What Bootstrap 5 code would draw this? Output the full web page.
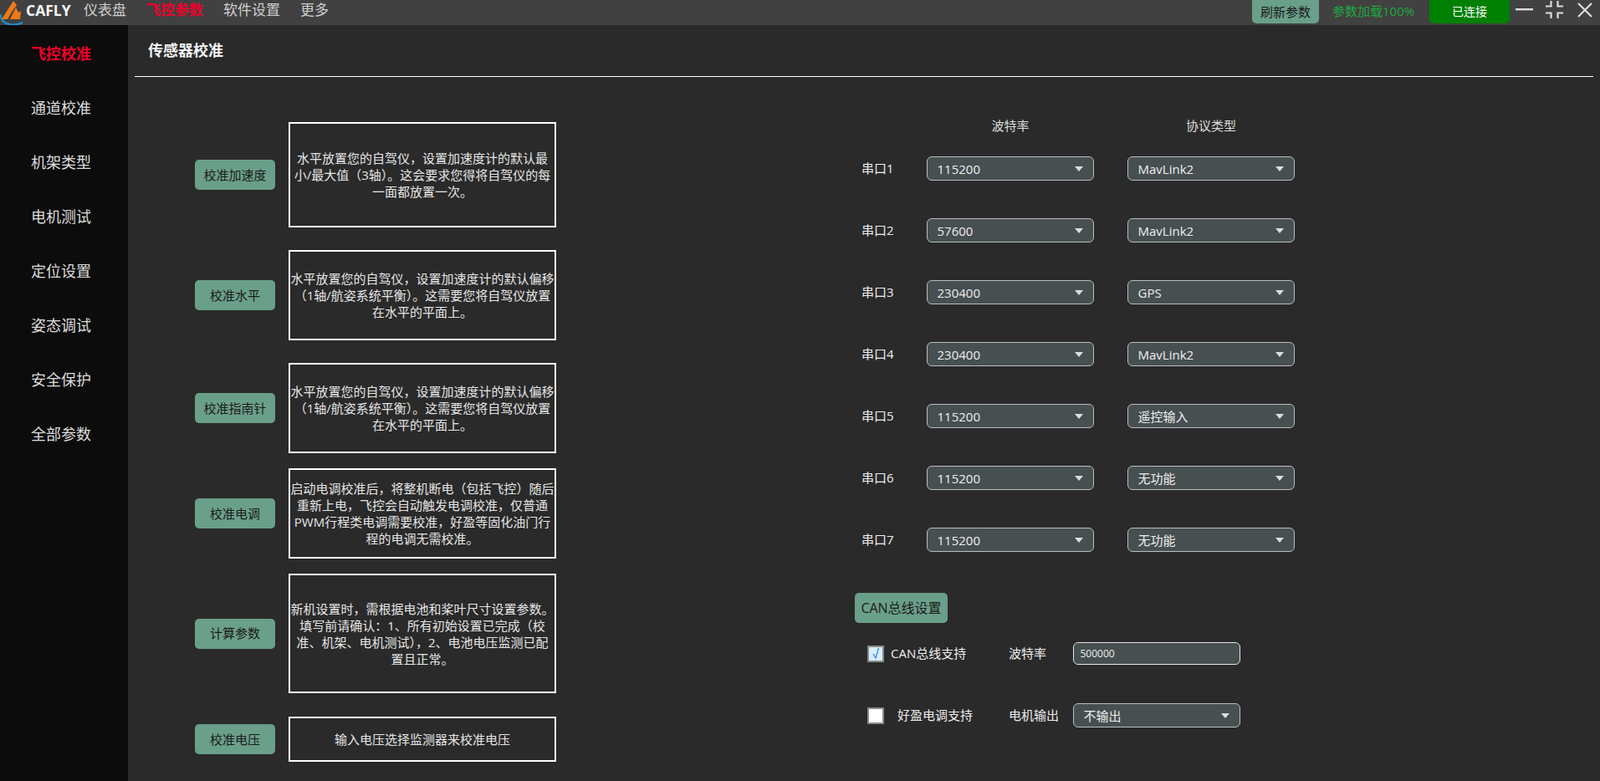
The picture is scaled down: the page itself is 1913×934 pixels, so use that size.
<!DOCTYPE html>
<html lang="zh-CN">
<head>
  <meta charset="UTF-8">
  <title>CAFLY 传感器校准</title>
  <meta name="viewport" content="width=device-width, initial-scale=1">
  <link href="https://cdn.jsdelivr.net/npm/bootstrap@5.3.0/dist/css/bootstrap.min.css" rel="stylesheet">
  <style>
    html, body { height: 100%; }
    body {
      background: #2a2a2a;
      color: #eee;
      font-family: "Open Sans", "Noto Sans CJK SC", sans-serif;
      font-size: 15px;
      overflow: hidden;
    }
    .top-bar { height: 30px; background: #414141; }
    .brand-box { width: 100px; height: 30px; flex: none; overflow: hidden; }
    .brand-name { font-size: 17.5px; font-weight: 700; color: #f4f6f8; line-height: 24px; }
    .top-menu { gap: 24px; }
    .top-link { font-size: 17px; color: #cfcfcf; text-decoration: none; line-height: 24px; }
    .top-link.on-page { color: #f0002a; font-weight: 700; }
    .sage-btn {
      background: #6a9f8a;
      color: #1a1a1a;
      border: 0;
      border-radius: 5px;
      height: 36px;
      padding: 0;
      font-size: 15px;
    }
    .sage-btn:hover { background: #6a9f8a; color: #1a1a1a; }
    .refresh-btn { width: 80px; height: 28px; border-radius: 0 0 5px 5px; }
    .load-note { color: #1fa83f; font-size: 15px; margin-left: 16px; width: 116px; line-height: 26px; }
    .link-state { width: 96px; height: 28px; padding-bottom: 2px; background: #008000; border-radius: 0 0 5px 5px; color: #fff; font-size: 14px; }
    .win-glyph { display: block; flex: none; }
    .win-min { margin-left: 7px; }
    .win-max { margin-left: 15px; }
    .win-close { margin-left: 17px; margin-right: 9px; }
    .side-rail { width: 153px; flex: none; background: #0c0c0c; padding-top: 2px; }
    .side-item { height: 65px; line-height: 65px; padding-left: 37px; font-size: 18px; color: #ddd; }
    .side-item.on-page { color: #f0002a; font-weight: 700; }
    .page-title { height: 62px; margin: 0 8px; border-bottom: 1px solid #fff; padding: 17px 0 0 16px; font-size: 18px; font-weight: 700; color: #f4f4f4; }
    .calib-col { width: 432px; margin-left: 80px; margin-top: 54px; flex: none; }
    .calib-row { display: flex; align-items: center; gap: 16px; }
    .calib-row .sage-btn { width: 96px; flex: none; }
    .calib-note {
      width: 320px;
      border: 2px solid #fff;
      display: flex;
      align-items: center;
      justify-content: center;
      text-align: center;
      white-space: nowrap;
      overflow: hidden;
      line-height: 20px;
      font-size: 15px;
      color: #e6e6e6;
    }
    .note-h54 { height: 54px; }
    .note-h108 { height: 108px; }
    .note-h126 { height: 126px; }
    .note-h143 { height: 143px; }
    .gap-18 { margin-top: 18px; }
    .gap-27 { margin-top: 27px; }
    .gap-28 { margin-top: 28px; }
    .port-col { margin-left: 365px; margin-top: 48px; width: 530px; flex: none; }
    .port-head { height: 20px; line-height: 20px; font-size: 15px; color: #ddd; margin-bottom: 27px; }
    .port-head span { width: 200px; text-align: center; display: block; }
    .port-head span:first-child { margin-left: 78px; }
    .port-head span:last-child { margin-left: 40px; }
    .port-row { height: 29px; margin-bottom: 45px; font-size: 15px; color: #eee; }
    .port-name { width: 78px; flex: none; }
    .dark-select.form-select, .dark-input.form-control {
      height: 29px;
      padding: 0 28px 0 11.5px;
      background-color: #474f51;
      border: 1.5px solid #b9bec0;
      border-radius: 6px;
      color: #eee;
      font-size: 15px;
      line-height: 26px;
      box-shadow: none;
    }
    .dark-select.form-select {
      background-image: url("data:image/svg+xml,%3Csvg xmlns='http://www.w3.org/2000/svg' width='10' height='6'%3E%3Cpath d='M0 0h10L5 6z' fill='%23ddd'/%3E%3C/svg%3E");
      background-size: 10px 6px;
      background-position: right 12px center;
    }
    .port-row .dark-select { width: 200px; flex: none; }
    .port-row .dark-select + .dark-select { margin-left: 40px; }
    .can-btn { width: 111px; margin: 49px 0 23px -8px; display: block; font-size: 16px; }
    .can-row { color: #eee; font-size: 15px; }
    .can-row .dark-select, .can-row .dark-input { width: 200px; flex: none; }
    .dark-input.form-control { height: 27px; border-color: #e8e8e8; padding-left: 7.5px; font-size: 12px; }
    .tick-box {
      width: 20px; height: 20px; flex: none;
      border: 2px solid #8a8a8a;
      background: #fff;
      display: flex; align-items: center; justify-content: center;
      margin-left: 7px;
    }
    .tick-box.is-on { background: #d8edfc; }
    .can-label-a { margin-left: 8px; width: 141px; flex: none; }
    .can-label-b { margin-left: 16px; width: 133px; flex: none; }
    .can-field { width: 77px; flex: none; }
    .row-a { height: 27px; margin-bottom: 46px; }
    .row-b { height: 29px; }
  </style>
</head>
<body>

<div class="d-flex flex-column vh-100">
  <!-- top menu -->
  <div class="top-bar d-flex align-items-start">
    <div class="brand-box d-flex align-items-start">
      <svg class="win-glyph" width="31" height="30" viewBox="0 0 31 30">
        <path d="M0 17Q2 29 14 29.5Q22 29.5 27 27" fill="none" stroke="#1b92cf" stroke-width="2.2"/>
        <path d="M2 23L16 1L20 6L13 16L9 23Z" fill="#ef7a17"/>
        <path d="M12 23L19 9L22 15L25 13L24 23Z" fill="#ef7a17"/>
      </svg>
      <span class="brand-name">CAFLY</span>
    </div>
    <div class="d-flex top-menu">
      <a class="top-link" href="#">仪表盘</a>
      <a class="top-link on-page" href="#">飞控参数</a>
      <a class="top-link" href="#">软件设置</a>
      <a class="top-link" href="#">更多</a>
    </div>
    <button class="btn sage-btn refresh-btn ms-auto" type="button">刷新参数</button>
    <span class="load-note">参数加载100%</span>
    <div class="link-state d-flex align-items-center justify-content-center">已连接</div>
    <svg class="win-glyph win-min" width="21" height="30" viewBox="0 0 21 30"><rect x="0" y="10" width="21" height="2.4" fill="#ddd"/></svg>
    <svg class="win-glyph win-max" width="21" height="30" viewBox="0 0 21 30">
      <path d="M6.5 1v6.5H0M14.5 1v6.5H21M6.5 22v-6.5H0M14.5 22v-6.5H21" fill="none" stroke="#ddd" stroke-width="2.2"/>
    </svg>
    <svg class="win-glyph win-close" width="18" height="30" viewBox="0 0 18 30">
      <path d="M1 4l16 16M17 4L1 20" fill="none" stroke="#ddd" stroke-width="2.2"/>
    </svg>
  </div>

  <div class="d-flex flex-grow-1">
    <!-- side menu -->
    <div class="side-rail">
      <div class="side-item on-page">飞控校准</div>
      <div class="side-item">通道校准</div>
      <div class="side-item">机架类型</div>
      <div class="side-item">电机测试</div>
      <div class="side-item">定位设置</div>
      <div class="side-item">姿态调试</div>
      <div class="side-item">安全保护</div>
      <div class="side-item">全部参数</div>
    </div>

    <div class="flex-grow-1">
      <div class="page-title">传感器校准</div>
      <div class="d-flex">
        <!-- calibration list -->
        <div class="calib-col">
          <div class="calib-row">
            <button class="btn sage-btn" type="button">校准加速度</button>
            <div class="calib-note note-h126"><div>水平放置您的自驾仪，设置加速度计的默认最<br>小/最大值（3轴）。这会要求您得将自驾仪的每<br>一面都放置一次。</div></div>
          </div>
          <div class="calib-row gap-27">
            <button class="btn sage-btn" type="button">校准水平</button>
            <div class="calib-note note-h108"><div>水平放置您的自驾仪，设置加速度计的默认偏移<br>（1轴/航姿系统平衡）。这需要您将自驾仪放置<br>在水平的平面上。</div></div>
          </div>
          <div class="calib-row gap-27">
            <button class="btn sage-btn" type="button">校准指南针</button>
            <div class="calib-note note-h108"><div>水平放置您的自驾仪，设置加速度计的默认偏移<br>（1轴/航姿系统平衡）。这需要您将自驾仪放置<br>在水平的平面上。</div></div>
          </div>
          <div class="calib-row gap-18">
            <button class="btn sage-btn" type="button">校准电调</button>
            <div class="calib-note note-h108"><div>启动电调校准后，将整机断电（包括飞控）随后<br>重新上电，飞控会自动触发电调校准，仅普通<br>PWM行程类电调需要校准，好盈等固化油门行<br>程的电调无需校准。</div></div>
          </div>
          <div class="calib-row gap-18">
            <button class="btn sage-btn" type="button">计算参数</button>
            <div class="calib-note note-h143"><div>新机设置时，需根据电池和桨叶尺寸设置参数。<br>填写前请确认：1、所有初始设置已完成（校<br>准、机架、电机测试），2、电池电压监测已配<br>置且正常。</div></div>
          </div>
          <div class="calib-row gap-28">
            <button class="btn sage-btn" type="button">校准电压</button>
            <div class="calib-note note-h54">输入电压选择监测器来校准电压</div>
          </div>
        </div>

        <!-- serial ports and CAN -->
        <div class="port-col">
          <div class="port-head d-flex"><span>波特率</span><span>协议类型</span></div>
          <div id="portRows"></div>
          <button class="btn sage-btn can-btn" type="button">CAN总线设置</button>
          <div class="can-row row-a d-flex align-items-center">
            <div class="tick-box is-on">
              <svg width="12" height="15" viewBox="0 0 12 15"><path d="M3 8l3 5L9.5 1" fill="none" stroke="#2f86e0" stroke-width="1.3"/></svg>
            </div>
            <span class="can-label-a">CAN总线支持</span>
            <span class="can-field">波特率</span>
            <input class="form-control dark-input" type="text" value="500000">
          </div>
          <div class="can-row row-b d-flex align-items-center">
            <div class="tick-box"></div>
            <span class="can-label-b">好盈电调支持</span>
            <span class="can-field">电机输出</span>
            <select class="form-select dark-select"><option>不输出</option></select>
          </div>
        </div>
      </div>
    </div>
  </div>
</div>

<script src="https://cdn.jsdelivr.net/npm/bootstrap@5.3.0/dist/js/bootstrap.bundle.min.js"></script>
<script>
  // serial port rows: baud rate + protocol
  const ports = [
    ['115200', 'MavLink2'],
    ['57600', 'MavLink2'],
    ['230400', 'GPS'],
    ['230400', 'MavLink2'],
    ['115200', '遥控输入'],
    ['115200', '无功能'],
    ['115200', '无功能']
  ];
  document.getElementById('portRows').innerHTML = ports.map((p, i) =>
    `<div class="port-row d-flex align-items-center">
      <span class="port-name">串口${i + 1}</span>
      <select class="form-select dark-select"><option>${p[0]}</option></select>
      <select class="form-select dark-select"><option>${p[1]}</option></select>
    </div>`).join('');
</script>

</body>
</html>
